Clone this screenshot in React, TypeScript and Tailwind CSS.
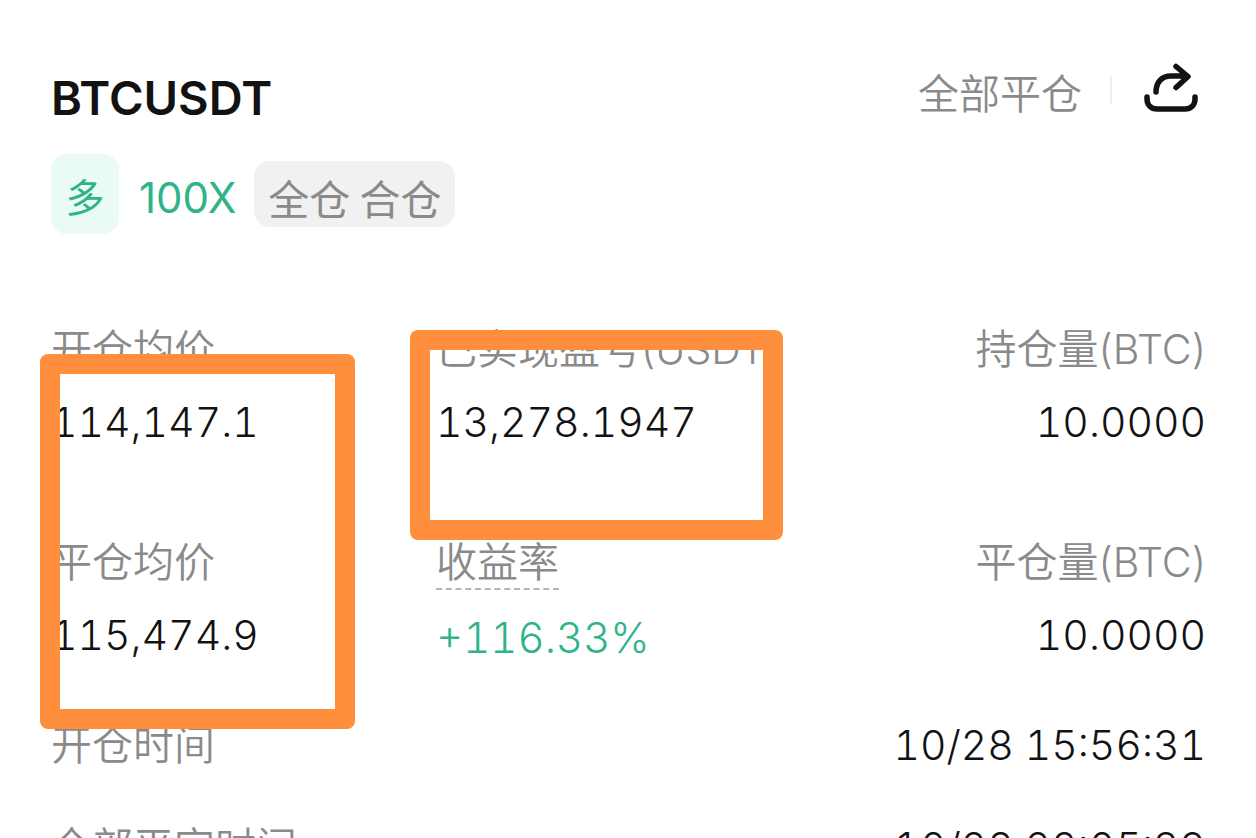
import type { ReactNode } from "react";

function Stat({ label, value, right, hint }: { label: string; value: string; right?: boolean; hint?: boolean }) {
  return (
    <div className={right ? "flex flex-col items-end" : "flex flex-col items-start"}>
      <dt
        className={
          hint
            ? "h-14 border-b-2 border-dashed border-[#b5b5b5] text-[41px] leading-14 font-[350] whitespace-nowrap text-[#8a8a8a]"
            : "h-14 text-[41px] leading-14 font-[350] whitespace-nowrap text-[#8a8a8a]"
        }
      >
        {label}
      </dt>
      <dd
        className={
          hint
            ? "mt-5 text-[42px] leading-14 font-light text-[#2fb488] tabular-nums"
            : "mt-[17px] text-[41px] leading-14 font-light text-[#121212] tabular-nums"
        }
      >
        {value}
      </dd>
    </div>
  );
}

function Row({ label, children }: { label: string; children: ReactNode }) {
  return (
    <div className="flex items-center justify-between">
      <dt className="text-[41px] leading-14 font-[350] text-[#8a8a8a]">{label}</dt>
      <dd className="text-[41px] leading-14 font-light text-[#121212] tabular-nums">{children}</dd>
    </div>
  );
}

export default function App() {
  return (
    <main className="relative min-h-screen overflow-hidden bg-white pt-[60px] pr-[50px] pl-[51px] font-['Inter','Noto_Sans_CJK_SC',sans-serif]">
      <header className="flex h-[68px] items-start justify-between">
        <h1 className="mt-1.5 text-[47px] leading-16 font-semibold text-[#121212]">BTCUSDT</h1>
        <div className="flex items-start">
          <button type="button" className="mt-1.5 text-[41px] leading-14 font-[350] text-[#8a8a8a]">
            全部平仓
          </button>
          <span className="mx-7 mt-4 h-7 w-0.5 bg-[#eeeeee]" />
          <button type="button" aria-label="分享" className="pr-1.5">
            <svg width="60" height="56" viewBox="0 0 60 56" fill="none" stroke="#121212" strokeWidth="5.5" strokeLinecap="round" strokeLinejoin="round">
              <path d="M7 37v2c0 6 4 10 10 10h28c6 0 10-4 10-10v-2" />
              <path d="M16 32c0-10 6-16 15-16h16M36 6.500l12 10-12 11" />
            </svg>
          </button>
        </div>
      </header>

      <div className="mt-[26px] flex h-20 items-center">
        <span className="flex h-20 w-[68px] items-center justify-center rounded-2xl bg-[#eafaf4] pt-2 text-[39px] text-[#2fb488]">多</span>
        <span className="ml-5 pt-2 text-[42px] leading-14 text-[#2fb488]">100X</span>
        <span className="ml-[18px] flex h-[66px] items-center rounded-2xl bg-[#f1f1f1] px-3.5 pt-2 font-['Noto_Sans_CJK_SC',sans-serif] text-[41px] text-[#8a8a8a]">全仓 合仓</span>
      </div>

      <dl className="mt-[87px] grid grid-cols-3 gap-y-[84px]">
        <Stat label="开仓均价" value="114,147.1" />
        <Stat label="已实现盈亏(USDT)" value="13,278.1947" />
        <Stat label="持仓量(BTC)" value="10.0000" right />
        <Stat label="平仓均价" value="115,474.9" />
        <Stat label="收益率" value="+116.33%" hint />
        <Stat label="平仓量(BTC)" value="10.0000" right />
      </dl>

      <dl className="mt-[51px] flex flex-col gap-[46px]">
        <Row label="开仓时间">10/28 15:56:31</Row>
        <Row label="全部平定时间">10/28 22:05:39</Row>
      </dl>

      <div className="pointer-events-none absolute top-[354px] left-10 h-[375px] w-[315px] rounded-lg border-20 border-[#ff8f3c]" />
      <div className="pointer-events-none absolute top-[330px] left-[410px] h-[210px] w-[373px] rounded-lg border-20 border-[#ff8f3c]" />
    </main>
  );
}
